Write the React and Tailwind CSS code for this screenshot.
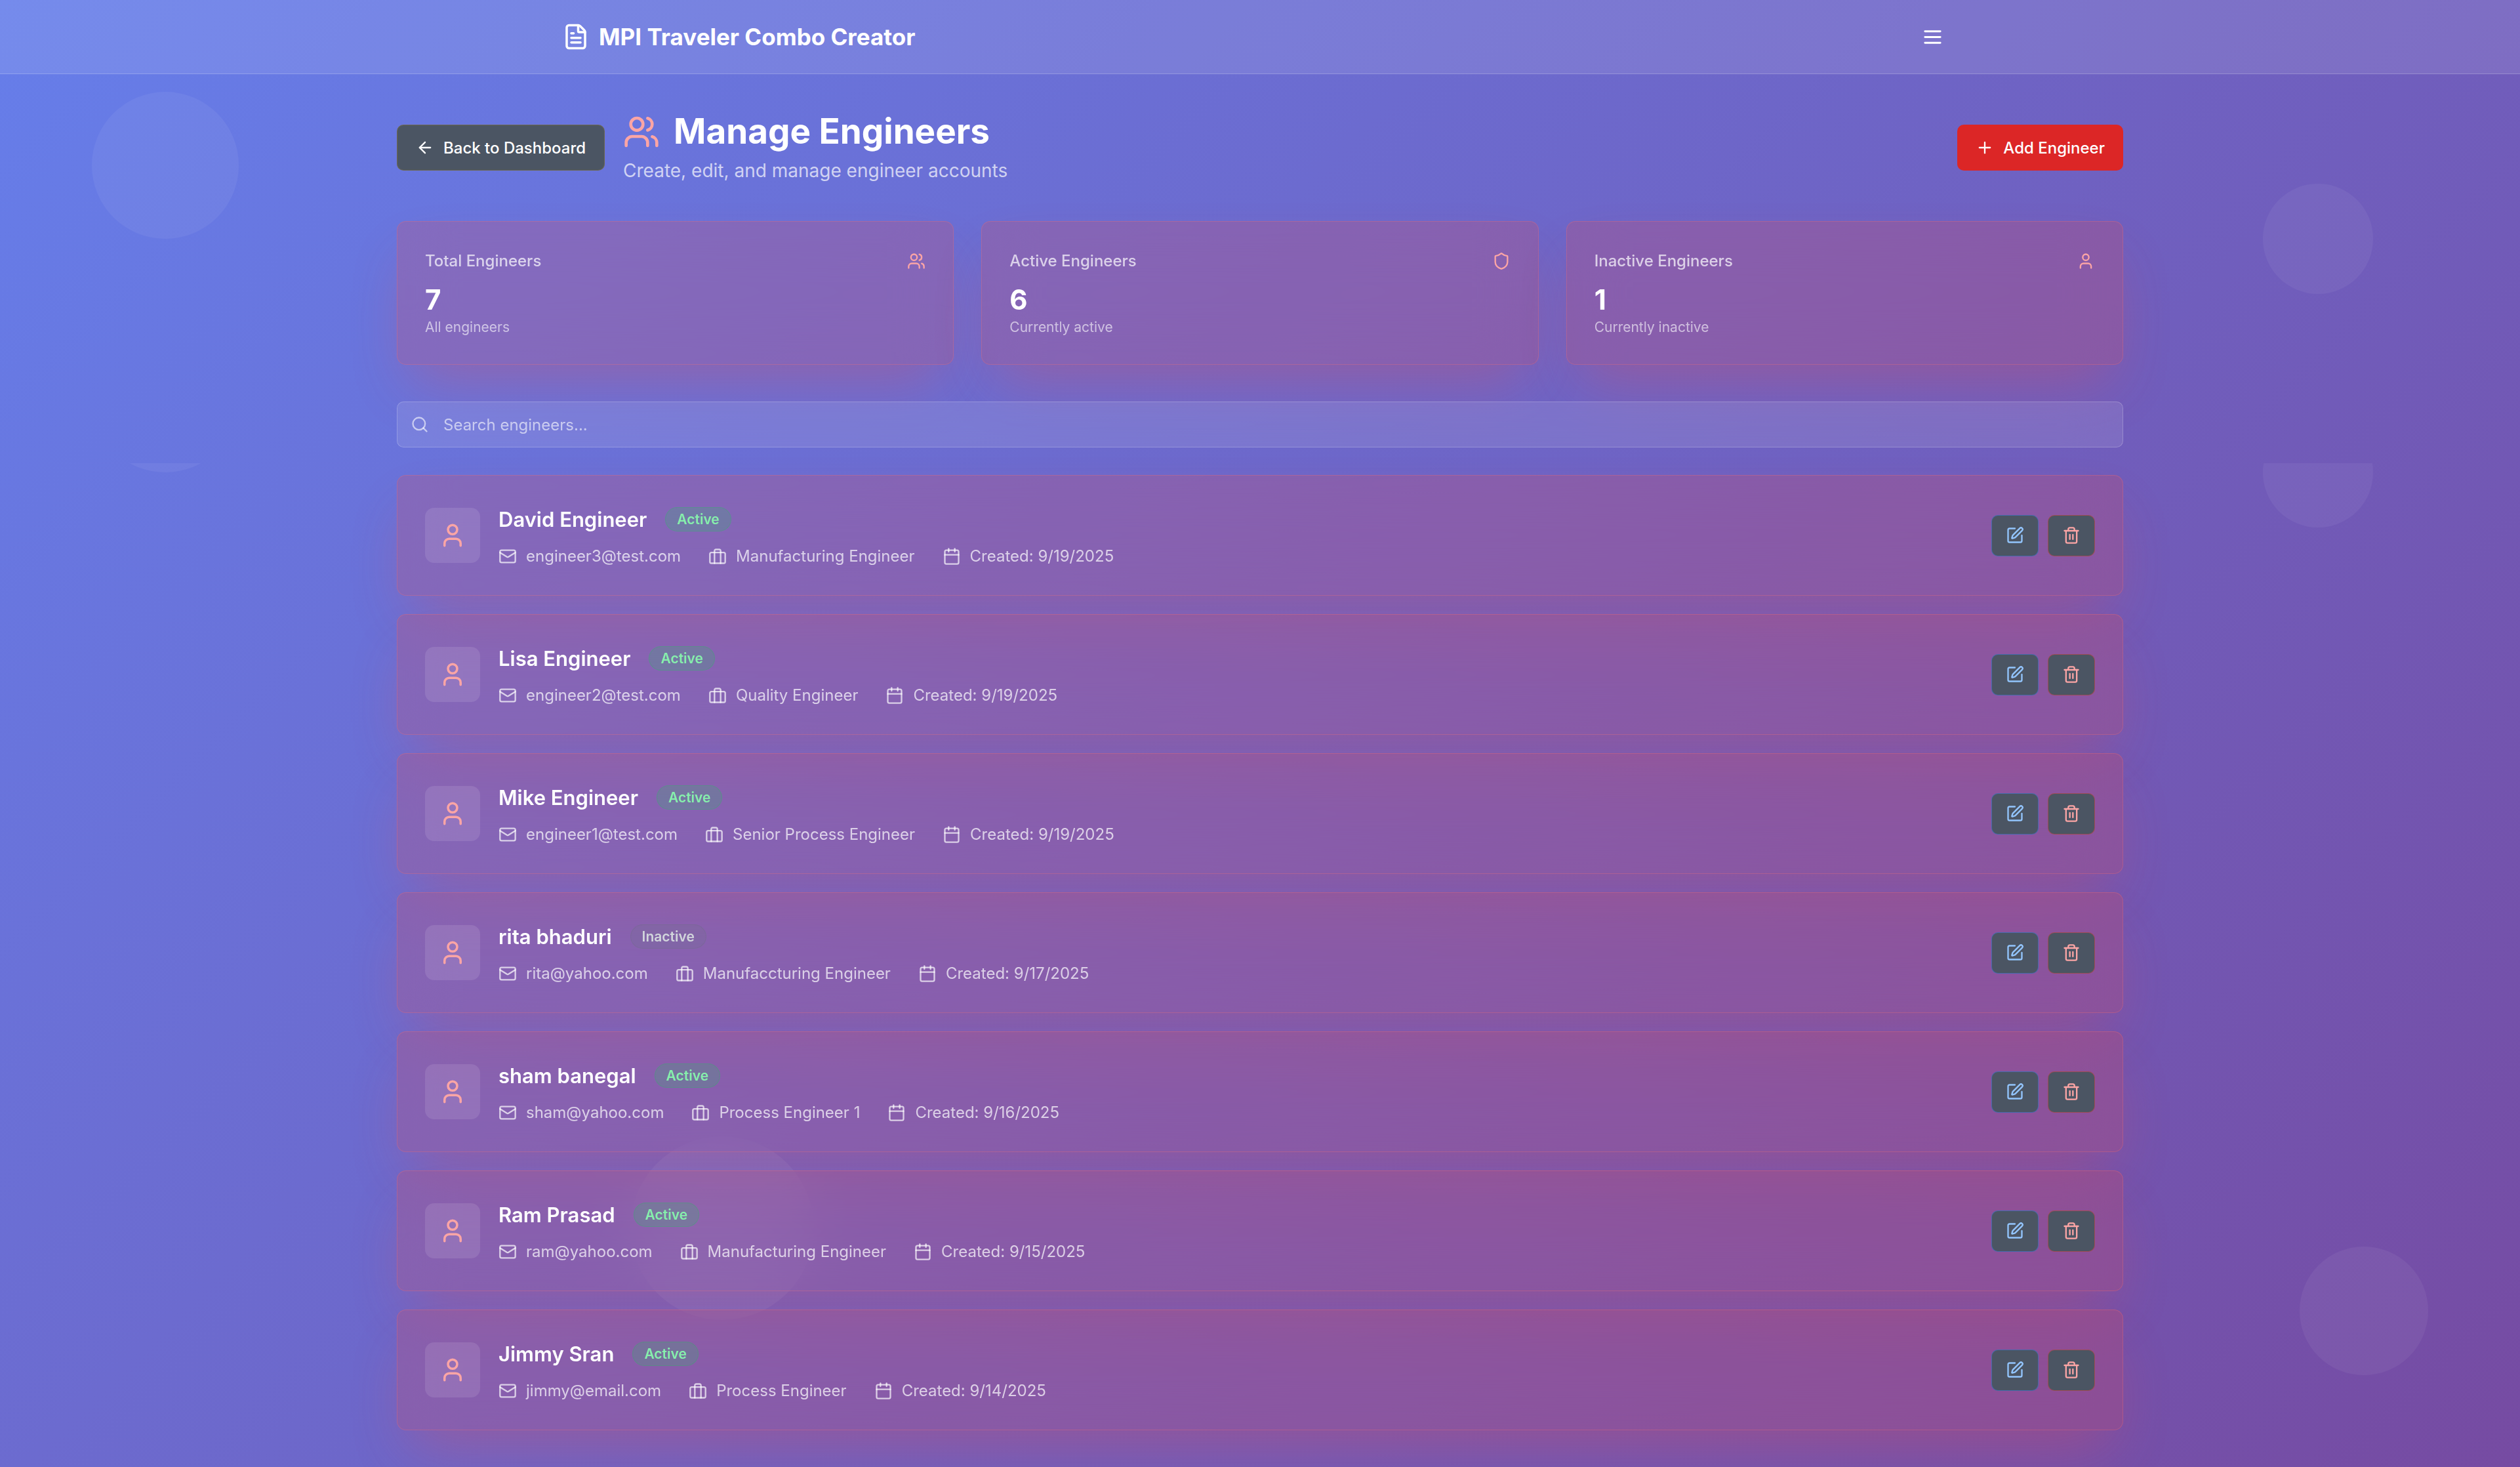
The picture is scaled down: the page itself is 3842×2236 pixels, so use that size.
import {
  ArrowLeft,
  Calendar,
  FileText,
  Mail,
  Plus,
  Search,
  Shield,
  SquarePen,
  Trash2,
  User,
  Users,
} from "lucide-react";

const stats = [
  { label: "Total Engineers", value: 7, note: "All engineers", icon: Users },
  { label: "Active Engineers", value: 6, note: "Currently active", icon: Shield },
  { label: "Inactive Engineers", value: 1, note: "Currently inactive", icon: User },
];

const engineers = [
  { name: "David Engineer", active: true, email: "engineer3@test.com", title: "Manufacturing Engineer", created: "9/19/2025" },
  { name: "Lisa Engineer", active: true, email: "engineer2@test.com", title: "Quality Engineer", created: "9/19/2025" },
  { name: "Mike Engineer", active: true, email: "engineer1@test.com", title: "Senior Process Engineer", created: "9/19/2025" },
  { name: "rita bhaduri", active: false, email: "rita@yahoo.com", title: "Manufaccturing Engineer", created: "9/17/2025" },
  { name: "sham banegal", active: true, email: "sham@yahoo.com", title: "Process Engineer 1", created: "9/16/2025" },
  { name: "Ram Prasad", active: true, email: "ram@yahoo.com", title: "Manufacturing Engineer", created: "9/15/2025" },
  { name: "Jimmy Sran", active: true, email: "jimmy@email.com", title: "Process Engineer", created: "9/14/2025" },
];

const glass =
  "rounded-[14px] border border-[#f87171]/30 bg-[#ef4444]/20 shadow-[0_44px_88px_-21px_rgba(239,68,68,0.3)] backdrop-blur-[42px]";

function Briefcase({ className }) {
  return (
    <svg viewBox="0 0 24 24" fill="none" stroke="currentColor" strokeWidth="2" strokeLinecap="round" strokeLinejoin="round" className={className} aria-hidden="true">
      <rect x="2" y="7" width="20" height="14" rx="2" />
      <path d="M16 21V5a2 2 0 0 0-2-2h-4a2 2 0 0 0-2 2v16" />
    </svg>
  );
}

function MenuIcon({ className }) {
  return (
    <svg viewBox="0 0 24 24" fill="none" stroke="currentColor" strokeWidth="2" strokeLinecap="round" className={className} aria-hidden="true">
      <path d="M4 6h16M4 12h16M4 18h16" />
    </svg>
  );
}

function Backdrop() {
  return (
    <div className="pointer-events-none absolute inset-0 overflow-hidden" aria-hidden="true">
      <div className="absolute left-[140px] top-[140px] size-56 rounded-full bg-white/5" />
      <div className="absolute right-56 top-[280px] size-42 rounded-full bg-white/5" />
      <div className="absolute bottom-56 left-1/4 size-70 rounded-full bg-white/5" />
      <div className="absolute bottom-[140px] right-[140px] size-49 rounded-full bg-white/5" />
      <div className="absolute inset-x-0 top-[706px] h-28 overflow-hidden">
        <div className="absolute bottom-[98px] left-[140px] size-56 rounded-full bg-white/5" />
        <div className="absolute bottom-3.5 right-56 size-42 rounded-full bg-white/5" />
      </div>
    </div>
  );
}

function Header() {
  return (
    <header className="relative border-b border-white/20 bg-white/10">
      <div className="mx-auto flex h-28 max-w-[2240px] items-center justify-between px-14">
        <a href="#" className="flex items-center gap-3.5 text-[35px] font-bold leading-[49px] text-white">
          <FileText className="size-10.5" />
          MPI Traveler Combo Creator
        </a>
        <button type="button" aria-label="Open menu" className="flex h-16 items-center px-[21px] text-white">
          <MenuIcon className="size-[35px]" />
        </button>
      </div>
    </header>
  );
}

function StatCard({ label, value, note, icon: Icon }) {
  return (
    <section className={`${glass} p-10.5`}>
      <div className="flex items-center justify-between pb-3.5">
        <h2 className="text-[24px] font-medium leading-[35px] text-white/70">{label}</h2>
        <Icon className="size-7 text-[#fca5a5]" />
      </div>
      <p className="text-[42px] font-bold leading-14 text-white">{value}</p>
      <p className="text-[21px] leading-7 text-white/60">{note}</p>
    </section>
  );
}

function EngineerCard({ name, active, email, title, created }) {
  return (
    <li className={`${glass} flex items-center justify-between p-10.5`}>
      <div className="flex items-center gap-7">
        <div className="flex size-21 items-center justify-center rounded-[14px] bg-white/10">
          <User className="size-10.5 text-[#fca5a5]" />
        </div>
        <div>
          <div className="flex items-center gap-7">
            <h3 className="text-[31px] font-semibold leading-[49px] text-white">{name}</h3>
            <span
              className={`rounded-full border px-[17px] py-[3px] text-[21px] font-semibold leading-[29px] ${
                active
                  ? "border-[#22c55e]/30 bg-[#22c55e]/20 text-[#86efac]"
                  : "border-[#6b7280]/30 bg-[#6b7280]/20 text-[#d1d5db]"
              }`}
            >
              {active ? "Active" : "Inactive"}
            </span>
          </div>
          <div className="mt-3.5 flex items-center gap-10.5 text-[24px] leading-[35px] text-white/70">
            <span className="flex items-center gap-3.5">
              <Mail className="size-7" />
              {email}
            </span>
            <span className="flex items-center gap-3.5">
              <Briefcase className="size-7" />
              {title}
            </span>
            <span className="flex items-center gap-3.5">
              <Calendar className="size-7" />
              Created: {created}
            </span>
          </div>
        </div>
      </div>
      <div className="flex items-center gap-3.5">
        <button type="button" aria-label={`Edit ${name}`} className="flex h-[63px] items-center rounded-[10px] border border-[#3b82f6]/50 bg-[#4b5563] px-[21px] text-[#93c5fd]">
          <SquarePen className="size-7" />
        </button>
        <button type="button" aria-label={`Delete ${name}`} className="flex h-[63px] items-center rounded-[10px] border border-[#ef4444]/50 bg-[#4b5563] px-[21px] text-[#fca5a5]">
          <Trash2 className="size-7" />
        </button>
      </div>
    </li>
  );
}

export default function App() {
  return (
    <div className="relative min-h-screen bg-[linear-gradient(135deg,#667eea_0%,#764ba2_100%)] font-['Inter',sans-serif]">
      <Backdrop />
      <Header />
      <main className="relative mx-auto max-w-[2688px] px-7 py-14">
        <div className="mb-14 flex items-center justify-between">
          <div className="flex items-center gap-7">
            <button type="button" className="flex h-17.5 items-center gap-3.5 rounded-[10px] border border-yellow-500/20 bg-[#4b5563] px-7 text-[24px] font-medium leading-[35px] text-white">
              <ArrowLeft className="size-7" />
              Back to Dashboard
            </button>
            <div>
              <h1 className="flex items-center gap-[21px] text-[53px] font-bold leading-[63px] text-white">
                <Users className="size-14 text-[#fca5a5]" />
                Manage Engineers
              </h1>
              <p className="mt-[7px] text-[28px] leading-[42px] text-white/70">Create, edit, and manage engineer accounts</p>
            </div>
          </div>
          <button type="button" className="flex h-17.5 items-center gap-3.5 rounded-[10px] bg-[#dc2626] px-7 text-[24px] font-medium leading-[35px] text-white">
            <Plus className="size-7" />
            Add Engineer
          </button>
        </div>

        <div className="mb-14 grid grid-cols-3 gap-10.5">
          {stats.map((s) => (
            <StatCard key={s.label} {...s} />
          ))}
        </div>

        <div className="relative mb-10.5">
          <input
            type="text"
            aria-label="Search engineers"
            placeholder="Search engineers..."
            className="block h-17.5 w-full rounded-[10px] border border-white/20 bg-white/10 pl-17.5 pr-5 text-[24px] leading-[35px] text-white backdrop-blur-[42px] placeholder:text-white/60"
          />
          <Search className="pointer-events-none absolute left-[21px] top-[21px] size-7 text-white/60" />
        </div>

        <ul className="flex flex-col gap-7">
          {engineers.map((e) => (
            <EngineerCard key={e.name} {...e} />
          ))}
        </ul>
      </main>
    </div>
  );
}
